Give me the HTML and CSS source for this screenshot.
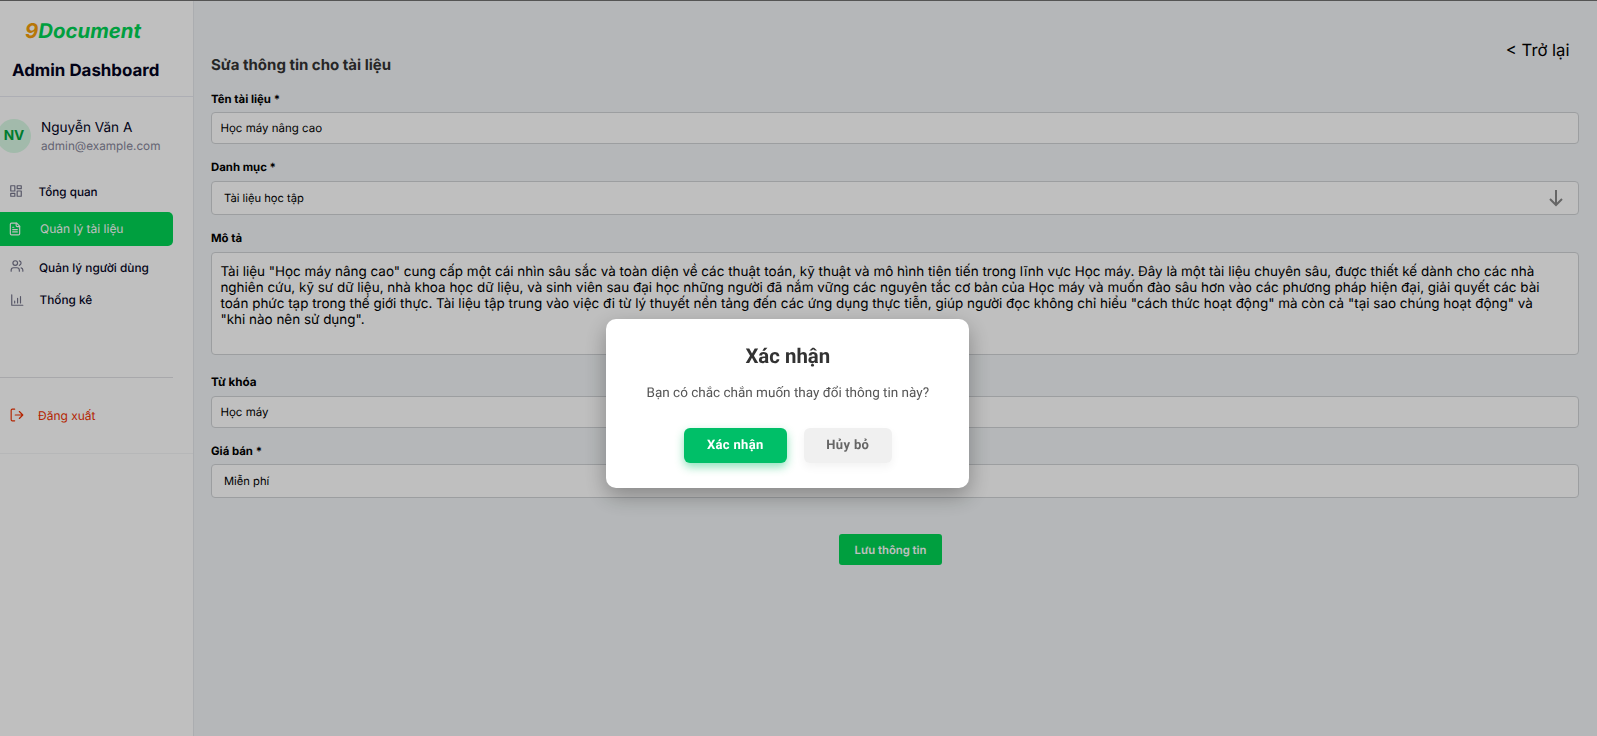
FILE: index.html
```
<!DOCTYPE html>
<html lang="vi">
<head>
<meta charset="utf-8">
<title>9Document</title>
<link rel="stylesheet" href="styles.css">
</head>
<body>
<div class="app">
  <aside class="sidebar">
    <header class="brand">
      <div class="logo"><span class="logo-nine">9</span>Document</div>
      <div class="brand-title">Admin Dashboard</div>
    </header>
    <div class="side-body">
      <div class="profile">
        <div class="avatar">NV</div>
        <div class="who">
          <div class="name">Nguyễn Văn A</div>
          <div class="email">admin@example.com</div>
        </div>
      </div>
      <nav class="nav">
        <a class="item overview">
          <svg class="icon" viewBox="0 0 24 24"><rect x="3" y="3" width="7" height="9"/><rect x="14" y="3" width="7" height="5"/><rect x="14" y="12" width="7" height="9"/><rect x="3" y="16" width="7" height="5"/></svg>
          <span>Tổng quan</span>
        </a>
        <a class="item active">
          <svg class="icon" viewBox="0 0 24 24"><path d="M15 2H6a2 2 0 0 0-2 2v16a2 2 0 0 0 2 2h12a2 2 0 0 0 2-2V7z"/><path d="M14 2v4a2 2 0 0 0 2 2h4M10 9H8M16 13H8M16 17H8"/></svg>
          <span>Quản lý tài liệu</span>
        </a>
        <a class="item users">
          <svg class="icon" viewBox="0 0 24 24"><path d="M16 21v-2a4 4 0 0 0-4-4H6a4 4 0 0 0-4 4v2"/><circle cx="9" cy="7" r="4"/><path d="M22 21v-2a4 4 0 0 0-3-3.87M16 3.13a4 4 0 0 1 0 7.75"/></svg>
          <span>Quản lý người dùng</span>
        </a>
        <a class="item stats">
          <svg class="icon" viewBox="0 0 24 24"><path d="M3 3v18h19M8 17v-3M13 17V9M18 17V6"/></svg>
          <span>Thống kê</span>
        </a>
      </nav>
      <a class="item logout">
        <svg class="icon" viewBox="0 0 24 24"><path d="M8 2H4a2 2 0 0 0-2 2v16a2 2 0 0 0 2 2h4M9 12h13M16 6l6 6-6 6"/></svg>
        <span>Đăng xuất</span>
      </a>
    </div>
  </aside>
  <main class="main">
    <div class="top"><a class="back">&lt; Trở lại</a></div>
    <h1 class="title">Sửa thông tin cho tài liệu</h1>
    <form class="form">
      <label class="label">Tên tài liệu *</label>
      <div class="field">Học máy nâng cao</div>
      <label class="label">Danh mục *</label>
      <div class="field select">Tài liệu học tập
        <svg class="arrow" viewBox="0 0 14 18"><path d="M7 1v15M1 10l6 6 6-6"/></svg>
      </div>
      <label class="label label-desc">Mô tả</label>
      <div class="field area">
        <div>Tài liệu "Học máy nâng cao" cung cấp một cái nhìn sâu sắc và toàn diện về các thuật toán, kỹ thuật và mô hình tiên tiến trong lĩnh vực Học máy. Đây là một tài liệu chuyên sâu, được thiết kế dành cho các nhà</div>
        <div>nghiên cứu, kỹ sư dữ liệu, nhà khoa học dữ liệu, và sinh viên sau đại học những người đã nắm vững các nguyên tắc cơ bản của Học máy và muốn đào sâu hơn vào các phương pháp hiện đại, giải quyết các bài</div>
        <div>toán phức tạp trong thế giới thực. Tài liệu tập trung vào việc đi từ lý thuyết nền tảng đến các ứng dụng thực tiễn, giúp người đọc không chỉ hiểu "cách thức hoạt động" mà còn cả "tại sao chúng hoạt động" và</div>
        <div>"khi nào nên sử dụng".</div>
      </div>
      <label class="label label-key">Từ khóa</label>
      <div class="field">Học máy</div>
      <label class="label label-price">Giá bán *</label>
      <div class="field select">Miễn phí</div>
      <div class="submit-row"><span class="submit">Lưu thông tin</span></div>
    </form>
  </main>
</div>
<div class="overlay">
  <section class="modal">
    <h2 class="modal-title">Xác nhận</h2>
    <p class="modal-text">Bạn có chắc chắn muốn thay đổi thông tin này?</p>
    <div class="modal-actions">
      <span class="btn confirm">Xác nhận</span>
      <span class="btn cancel">Hủy bỏ</span>
    </div>
  </section>
</div>
</body>
</html>
```
FILE: styles.css
```
* { box-sizing: border-box; }
body { margin: 0; font-family: Inter, "Liberation Sans", sans-serif; color: #000; overflow: hidden; text-rendering: geometricPrecision; }
.app { display: flex; height: 736px; background: #f2f5f7; border-top: 1px solid #707070; }

.sidebar { width: 194px; flex: none; background: #fff; border-right: 1px solid #e5e7eb; overflow: hidden; white-space: nowrap; }
.brand { height: 96px; border-bottom: 1px solid #e7e9f1; padding: 16px 0 0 12px; }
.logo { padding-left: 13px; font-size: 20.4px; line-height: 28px; font-weight: 700; font-style: italic; color: #00d455; }
.logo-nine { color: #f59e0b; }
.brand-title { margin-top: 13px; font-size: 16.9px; line-height: 27px; font-weight: 700; color: #030320; }
.side-body { height: 357px; border-bottom: 1px solid #f3f4f6; }
.profile { display: flex; align-items: center; padding-top: 20px; gap: 10px; }
.avatar { width: 34px; height: 34px; margin-left: -3px; border-radius: 50%; background: #d9f9e5; color: #00a63e; font-size: 13.7px; font-weight: 700; line-height: 35px; text-align: center; }
.who { padding-top: 2px; }
.name { font-size: 13.6px; line-height: 19px; color: #05051f; }
.email { font-size: 11.75px; line-height: 17px; color: #858599; }
.nav { height: 223px; width: 173px; border-bottom: 1px solid #e0e0e4; padding-top: 19px; }
.item { display: flex; align-items: center; font-size: 12px; color: #05051f; height: 34px; font-weight: 500; }
.icon { width: 14px; height: 14px; flex: none; fill: none; stroke: #74748a; stroke-width: 2; stroke-linecap: round; stroke-linejoin: round; }
.overview { padding-left: 9px; gap: 15.5px; height: 38px; padding-bottom: 2px; font-size: 11.7px; }
.overview .icon { margin-bottom: 2px; }
.active { background: #00d455; color: #fff; padding: 0 0 1px 8px; gap: 18px; border-radius: 0 5px 5px 0; font-weight: 400; }
.active .icon { stroke: #fff; }
.users { padding-left: 10px; gap: 15px; height: 38px; padding-top: 5px; font-size: 11.85px; }
.users .icon { margin-bottom: 3px; }
.stats { padding-left: 10px; gap: 15.5px; height: 32px; font-size: 11.8px; }
.stats .icon { margin-bottom: 1px; }
.logout { padding-left: 10px; gap: 14px; margin-top: 20px; color: #f03000; font-weight: 400; }
.logout .icon { stroke: #f03000; }

.main { flex: 1; padding: 37px 18px 0 17px; }
.top { display: flex; justify-content: flex-end; height: 17px; padding-right: 9.5px; }
.back { font-size: 16.7px; line-height: 26px; }
.title { margin: 0; font-size: 15px; line-height: 20px; font-weight: 700; color: #333; }
.form { display: flex; flex-direction: column; }
.label { font-size: 11.4px; line-height: 16px; font-weight: 700; margin: 16px 0 5px; }
.field { height: 32px; border: 1px solid #d0d3d6; border-radius: 4px; background: #fff; font-size: 11.5px; line-height: 30px; padding-left: 8.4px; }
.field + .label { margin-top: 15px; margin-bottom: 6px; }
.select { height: 34px; line-height: 33px; font-size: 11.2px; padding: 0 15px 0 12px; display: flex; align-items: center; justify-content: space-between; }
.arrow { width: 14px; height: 18px; fill: none; stroke: #888; stroke-width: 2; }
.area { height: 103px; padding-top: 11px; font-size: 13.46px; line-height: 16px; white-space: nowrap; }
.field + .label-key { margin-top: 19px; margin-bottom: 6px; font-size: 11.7px; }
.field + .label-price { margin-top: 15px; margin-bottom: 5px; }
.submit-row { display: flex; justify-content: center; margin-top: 36px; padding-right: 9px; }
.submit { width: 103px; height: 31px; border-radius: 3px; background: #00d455; color: #fff; font-size: 11.3px; font-weight: 600; line-height: 32px; text-align: center; }

.overlay { position: fixed; inset: 0; background: rgba(0,0,0,.25); display: flex; justify-content: center; align-items: flex-start; padding: 319px 21.4px 0 0; }
.modal { width: 363px; height: 169px; border-radius: 10px; background: #fff; box-shadow: 0 8px 22px rgba(0,0,0,.3); text-align: center; font-family: Roboto, "Liberation Sans", sans-serif; }
.modal-title { margin: 24px 0 0; font-size: 20.4px; line-height: 27px; font-weight: 700; color: #333; }
.modal-text { margin: 13px 0 0; font-size: 13.5px; line-height: 20px; color: #555; }
.modal-actions { display: flex; justify-content: center; gap: 17px; margin-top: 25px; }
.btn { height: 35px; border-radius: 6px; font-size: 13px; line-height: 35px; font-weight: 700; letter-spacing: .35px; }
.confirm { width: 103px; background: #00bf68; color: #fff; box-shadow: 0 4px 10px rgba(0,191,104,.45); }
.cancel { width: 88px; background: #f0f0f0; color: #666; box-shadow: 0 4px 10px rgba(0,0,0,.05); }
```
